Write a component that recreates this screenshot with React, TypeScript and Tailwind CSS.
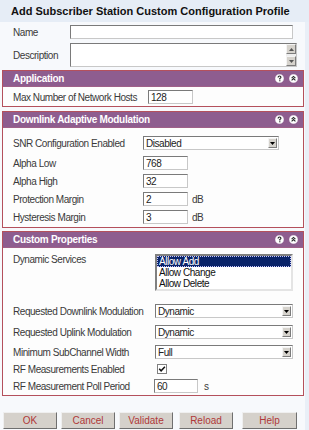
import React from "react";

const font = "font-['Liberation_Sans',Arial,sans-serif]";

function HelpIcons() {
  return (
    <div className="flex items-center gap-[5px] pr-[5px]">
      <svg width="9" height="9" viewBox="0 0 9 9">
        <circle cx="4.5" cy="4.5" r="4.3" fill="#ffffff" stroke="#d8c8d8" strokeWidth="0.4" />
        <path d="M3.1 3.4 Q3.1 2 4.5 2 Q5.9 2 5.9 3.2 Q5.9 4 4.8 4.5 L4.8 5.4" fill="none" stroke="#2a2a2a" strokeWidth="1.2" />
        <rect x="4.2" y="6.2" width="1.2" height="1.1" fill="#2a2a2a" />
      </svg>
      <svg width="9" height="9" viewBox="0 0 9 9">
        <circle cx="4.5" cy="4.5" r="4.3" fill="#ffffff" stroke="#d8c8d8" strokeWidth="0.4" />
        <path d="M2.6 4.2 L4.5 2.4 L6.4 4.2 M2.6 6.4 L4.5 4.6 L6.4 6.4" fill="none" stroke="#2a2a2a" strokeWidth="1.1" />
      </svg>
    </div>
  );
}

function Section({ title, children }: { title: string; children: React.ReactNode }) {
  return (
    <div className="ml-[2px] w-[302px] border border-[#b4505c] bg-[#fdfdfd]">
      <div className="flex h-[16px] items-center justify-between border-b border-[#a06088] bg-[#8e5d8f]">
        <span className="pl-[10px] text-[10px] font-bold tracking-[-0.3px] text-white">{title}</span>
        <HelpIcons />
      </div>
      {children}
    </div>
  );
}

function TextBox({ value, w }: { value?: string; w: string }) {
  return (
    <div
      className={`flex h-[14px] items-center border border-t-[#7a7a7a] border-l-[#7a7a7a] border-r-[#c8c8c8] border-b-[#c8c8c8] bg-white pl-[2px] text-[10px] text-[#222] ${w}`}
    >
      {value}
    </div>
  );
}

function Select({ value, w }: { value: string; w: string }) {
  return (
    <div
      className={`flex h-[14px] items-center border border-t-[#7a7a7a] border-l-[#7a7a7a] border-r-[#c8c8c8] border-b-[#c8c8c8] bg-white ${w}`}
    >
      <span className="flex-1 pl-[2px] text-[10px] text-[#222]">{value}</span>
      <span className="mr-[1px] flex h-[10px] w-[9px] items-center justify-center border border-t-[#f4f4f4] border-l-[#f4f4f4] border-r-[#7c7c7c] border-b-[#7c7c7c] bg-[#d6d3cd]">
        <svg width="5" height="3" viewBox="0 0 5 3">
          <path d="M0 0 H5 L2.5 3 Z" fill="#000" />
        </svg>
      </span>
    </div>
  );
}

function Row({ label, lw, children, h = "h-[18px]", extra }: { label: string; lw: string; children: React.ReactNode; h?: string; extra?: string }) {
  return (
    <div className={`flex items-center pl-[10px] ${h} ${extra ?? ""}`}>
      <span className={`shrink-0 ${lw}`}>{label}</span>
      {children}
    </div>
  );
}

function Button({ label, w = "w-[54px]", ml }: { label: string; w?: string; ml: string }) {
  return (
    <div
      className={`flex h-[17px] items-center justify-center border border-t-[#efefef] border-l-[#efefef] border-r-[#6f6f6f] border-b-[#6f6f6f] bg-[#d5d1cb] text-[10px] text-[#b03838] ${w} ${ml}`}
    >
      {label}
    </div>
  );
}

export default function App() {
  return (
    <div className={`${font} h-[430px] w-[309px] overflow-hidden bg-[#e9eff7] text-[10px] tracking-[-0.45px] text-[#3a3a3a]`}>
      <div className="flex h-[22px] items-center bg-[#e6edf6] pl-[11px] text-[11px] font-bold tracking-[0px] text-[#111]">
        Add Subscriber Station Custom Configuration Profile
      </div>
      <div className="w-[305px] bg-[#f7f9fc] pb-[60px]">
        <div className="flex h-[18px] items-center pl-[13px] pt-[2px]">
          <span className="w-[57px] shrink-0">Name</span>
          <TextBox w="w-[223px]" />
        </div>
        <div className="mt-[3px] flex h-[24px] items-center pl-[13px]">
          <span className="w-[57px] shrink-0">Description</span>
          <div className="flex h-[24px] w-[227px] border border-t-[#7a7a7a] border-l-[#7a7a7a] border-r-[#c8c8c8] border-b-[#c8c8c8] bg-white">
            <div className="flex-1" />
            <div className="flex w-[10px] flex-col justify-between bg-[#eeeeee]">
              <div className="flex h-[10px] items-center justify-center border border-t-[#f4f4f4] border-l-[#f4f4f4] border-r-[#7c7c7c] border-b-[#7c7c7c] bg-[#d6d3cd]">
                <svg width="5" height="3" viewBox="0 0 5 3">
                  <path d="M0 3 H5 L2.5 0 Z" fill="#555" />
                </svg>
              </div>
              <div className="flex h-[10px] items-center justify-center border border-t-[#f4f4f4] border-l-[#f4f4f4] border-r-[#7c7c7c] border-b-[#7c7c7c] bg-[#d6d3cd]">
                <svg width="5" height="3" viewBox="0 0 5 3">
                  <path d="M0 0 H5 L2.5 3 Z" fill="#555" />
                </svg>
              </div>
            </div>
          </div>
        </div>

        <div className="mt-[3px]">
          <Section title="Application">
            <Row label="Max Number of Network Hosts" lw="w-[135px]" extra="mt-[1px]">
              <TextBox value="128" w="w-[45px]" />
            </Row>
          </Section>
        </div>

        <div className="mt-[4px]">
          <Section title="Downlink Adaptive Modulation">
            <div className="pb-[1px] pt-[6px]">
              <Row label="SNR Configuration Enabled" lw="w-[130px]">
                <Select value="Disabled" w="w-[136px]" />
              </Row>
              <Row label="Alpha Low" lw="w-[130px]" extra="mt-[2px]">
                <TextBox value="768" w="w-[45px]" />
              </Row>
              <Row label="Alpha High" lw="w-[130px]">
                <TextBox value="32" w="w-[45px]" />
              </Row>
              <Row label="Protection Margin" lw="w-[130px]">
                <TextBox value="2" w="w-[45px]" />
                <span className="ml-[4px]">dB</span>
              </Row>
              <Row label="Hysteresis Margin" lw="w-[130px]">
                <TextBox value="3" w="w-[45px]" />
                <span className="ml-[4px]">dB</span>
              </Row>
            </div>
          </Section>
        </div>

        <div className="mt-[3px]">
          <Section title="Custom Properties">
            <div className="flex items-start pl-[10px] pt-[6px]">
              <span className="w-[142px] shrink-0 leading-[12px]">Dynamic Services</span>
              <div className="flex h-[37px] w-[138px] flex-col border-2 border-t-[#808080] border-l-[#808080] border-r-[#e4e4e4] border-b-[#e4e4e4] bg-white text-[10px] leading-[11px] text-[#111]">
                <div className="h-[11px] bg-[#0a246a] pl-[2px] text-white outline-1 outline-dotted outline-offset-[-1px] outline-[#c8c8ff]">Allow Add</div>
                <div className="h-[11px] pl-[2px]">Allow Change</div>
                <div className="h-[11px] pl-[2px]">Allow Delete</div>
              </div>
            </div>
            <Row label="Requested Downlink Modulation" lw="w-[142px]" extra="mt-[11px]">
              <Select value="Dynamic" w="w-[138px]" />
            </Row>
            <Row label="Requested Uplink Modulation" lw="w-[142px]" extra="mt-[3px]">
              <Select value="Dynamic" w="w-[138px]" />
            </Row>
            <Row label="Minimum SubChannel Width" lw="w-[142px]" extra="mt-[2px]">
              <Select value="Full" w="w-[138px]" />
            </Row>
            <Row label="RF Measurements Enabled" lw="w-[144px]" h="h-[16px]">
              <svg width="10" height="10" viewBox="0 0 10 10">
                <rect x="0.5" y="0.5" width="9" height="9" fill="#fff" stroke="#808080" />
                <path d="M2.2 4.8 L4.1 6.8 L7.9 2.8" fill="none" stroke="#111" strokeWidth="1.5" />
              </svg>
            </Row>
            <Row label="RF Measurement Poll Period" lw="w-[141px]">
              <TextBox value="60" w="w-[44px]" />
              <span className="ml-[6px]">s</span>
            </Row>
          </Section>
        </div>

        <div className="mt-[16px] flex tracking-[0px]">
          <Button label="OK" ml="ml-[3px]" />
          <Button label="Cancel" ml="ml-[4px]" />
          <Button label="Validate" ml="ml-[4px]" />
          <Button label="Reload" ml="ml-[6px]" />
          <Button label="Help" w="w-[55px]" ml="ml-[9px]" />
        </div>
      </div>
    </div>
  );
}
